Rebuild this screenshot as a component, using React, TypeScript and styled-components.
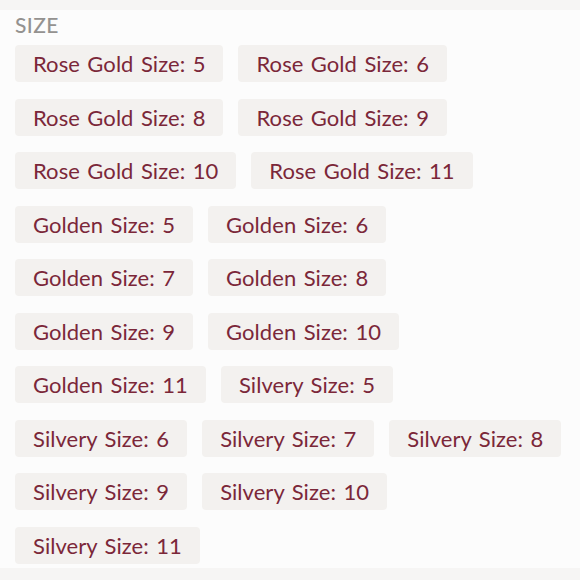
import React from 'react'
import styled, { createGlobalStyle } from 'styled-components'

const GlobalStyle = createGlobalStyle`
	html, body {
		margin: 0;
		padding: 0;
		background: #f6f5f4;
	}
`

const Page = styled.div`
	width: 580px;
	height: 580px;
	padding-top: 10px;
	box-sizing: border-box;
	font-family: Lato, 'Noto Sans', sans-serif;
`

const Panel = styled.section`
	background: #fcfcfc;
	height: 558px;
	padding: 3px 14px 0 15px;
	box-sizing: border-box;
`

const Title = styled.h3`
	margin: 0 0 8px;
	color: #949290;
	font-size: 21px;
	font-weight: 500;
	line-height: 24px;
	letter-spacing: 0.4px;
`

const Options = styled.div`
	display: flex;
	flex-wrap: wrap;
	column-gap: 15px;
	row-gap: 16.5px;
`

const Option = styled.button`
	height: 37px;
	padding: 0 18px;
	border: none;
	border-radius: 4px;
	background: #f3f1ef;
	color: #7b2739;
	font-family: inherit;
	font-size: 22px;
	font-weight: 400;
	letter-spacing: 0.05px;
	word-spacing: 1.8px;
	cursor: pointer;
`

const sizes: string[] = [
	'Rose Gold Size: 5',
	'Rose Gold Size: 6',
	'Rose Gold Size: 8',
	'Rose Gold Size: 9',
	'Rose Gold Size: 10',
	'Rose Gold Size: 11',
	'Golden Size: 5',
	'Golden Size: 6',
	'Golden Size: 7',
	'Golden Size: 8',
	'Golden Size: 9',
	'Golden Size: 10',
	'Golden Size: 11',
	'Silvery Size: 5',
	'Silvery Size: 6',
	'Silvery Size: 7',
	'Silvery Size: 8',
	'Silvery Size: 9',
	'Silvery Size: 10',
	'Silvery Size: 11'
]

const App: React.FC = () => {
	return (
		<Page>
			<GlobalStyle />
			<Panel>
				<Title>SIZE</Title>
				<Options>
					{sizes.map(size => <Option key={size}>{size}</Option>)}
				</Options>
			</Panel>
		</Page>
	)
}

export default App
